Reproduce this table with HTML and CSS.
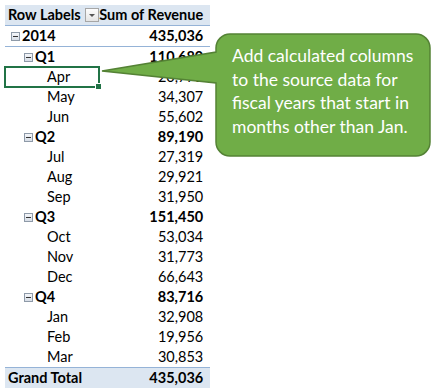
FILE: index.html
```
<!DOCTYPE html>
<html lang="en">
<head>
  <meta charset="UTF-8" />
  <title>Pivot Table</title>
  <link rel="stylesheet" href="styles.css">
</head>
<body>
  <table class="pivot">
    <tr class="head">
      <td class="lbl">Row Labels <span class="drop"></span></td>
      <td class="val">Sum of Revenue</td>
    </tr>
    <tr class="year">
      <td class="lbl"><span class="tog"></span>2014</td>
      <td class="val">435,036</td>
    </tr>
    <tr class="qtr"><td class="lbl"><span class="tog"></span>Q1</td><td class="val">110,680</td></tr>
    <tr class="mon sel"><td class="lbl">Apr</td><td class="val">20,771</td></tr>
    <tr class="mon"><td class="lbl">May</td><td class="val">34,307</td></tr>
    <tr class="mon"><td class="lbl">Jun</td><td class="val">55,602</td></tr>
    <tr class="qtr"><td class="lbl"><span class="tog"></span>Q2</td><td class="val">89,190</td></tr>
    <tr class="mon"><td class="lbl">Jul</td><td class="val">27,319</td></tr>
    <tr class="mon"><td class="lbl">Aug</td><td class="val">29,921</td></tr>
    <tr class="mon"><td class="lbl">Sep</td><td class="val">31,950</td></tr>
    <tr class="qtr"><td class="lbl"><span class="tog"></span>Q3</td><td class="val">151,450</td></tr>
    <tr class="mon"><td class="lbl">Oct</td><td class="val">53,034</td></tr>
    <tr class="mon"><td class="lbl">Nov</td><td class="val">31,773</td></tr>
    <tr class="mon"><td class="lbl">Dec</td><td class="val">66,643</td></tr>
    <tr class="qtr"><td class="lbl"><span class="tog"></span>Q4</td><td class="val">83,716</td></tr>
    <tr class="mon"><td class="lbl">Jan</td><td class="val">32,908</td></tr>
    <tr class="mon"><td class="lbl">Feb</td><td class="val">19,956</td></tr>
    <tr class="mon"><td class="lbl">Mar</td><td class="val">30,853</td></tr>
    <tr class="total"><td class="lbl">Grand Total</td><td class="val">435,036</td></tr>
  </table>

  <!-- callout over the sheet -->
  <div class="callout">
    <svg class="bubble" width="336" height="126" viewBox="0 0 336 126">
      <path d="M131 1 H317 A14 14 0 0 1 331 15 V109 A14 14 0 0 1 317 123 H131 A14 14 0 0 1 117 109 V50 L3 38 L117 19 V15 A14 14 0 0 1 131 1 Z"
            fill="#70ad47" stroke="#548235" stroke-width="1.5" />
    </svg>
    <p class="note">Add calculated columns to the source data for fiscal years that start in months other than Jan.</p>
  </div>
</body>
</html>
```
FILE: styles.css
```
* {
  box-sizing: border-box;
  margin: 0;
  padding: 0;
}

body {
  background: #fff;
  padding: 5px;
  font-family: Lato, "Liberation Sans", sans-serif;
  color: #000;
  position: relative;
  width: 435px;
  height: 389px;
  overflow: hidden;
}

.pivot {
  border-collapse: collapse;
  width: 202px;
  font-size: 14.5px;
}

.pivot td {
  height: 20px;
  padding: 0;
  white-space: nowrap;
  line-height: 20px;
}

.pivot .lbl {
  width: 93px;
  padding-left: 3px;
}

.pivot .val {
  text-align: right;
  padding-right: 7px;
}

.head td {
  background: #dce6f1;
  font-weight: bold;
  border-bottom: 1px solid #95b3d7;
}

.drop {
  display: inline-block;
  width: 14px;
  height: 14px;
  vertical-align: -2px;
  margin-left: 1px;
  border: 1px solid #a6a6a6;
  background: linear-gradient(#fdfdfd, #e4e4e4);
  position: relative;
}

.drop::after {
  content: "";
  position: absolute;
  left: 3px;
  top: 5px;
  border-left: 3px solid transparent;
  border-right: 3px solid transparent;
  border-top: 3px solid #555;
}

.year td {
  font-weight: bold;
  border-bottom: 1px solid #95b3d7;
}

.year .lbl {
  padding-left: 6px;
}

.qtr td {
  font-weight: bold;
}

.qtr .lbl {
  padding-left: 19px;
}

.mon .lbl {
  padding-left: 42px;
}

.tog {
  display: inline-block;
  width: 9px;
  height: 9px;
  margin-right: 2px;
  vertical-align: 0;
  border: 1px solid #8e9aa8;
  background: linear-gradient(#f5f7fa, #d7dde6);
  position: relative;
}

.tog::after {
  content: "";
  position: absolute;
  left: 1px;
  top: 3px;
  width: 5px;
  height: 1px;
  background: #333;
}

.sel .lbl {
  outline: 2px solid #217346;
  outline-offset: -1px;
  position: relative;
}

.sel .lbl::after {
  content: "";
  position: absolute;
  right: -3px;
  bottom: -3px;
  width: 5px;
  height: 5px;
  background: #217346;
  border: 1px solid #fff;
}

.total td {
  background: #dce6f1;
  font-weight: bold;
  border-top: 1px solid #95b3d7;
}

.callout {
  position: absolute;
  left: 99px;
  top: 33px;
  width: 336px;
  height: 126px;
}

.bubble {
  position: absolute;
  left: 0;
  top: 0;
}

.note {
  position: absolute;
  left: 133px;
  top: 11px;
  width: 196px;
  color: #fff;
  font-size: 17.5px;
  line-height: 23.5px;
}
```
